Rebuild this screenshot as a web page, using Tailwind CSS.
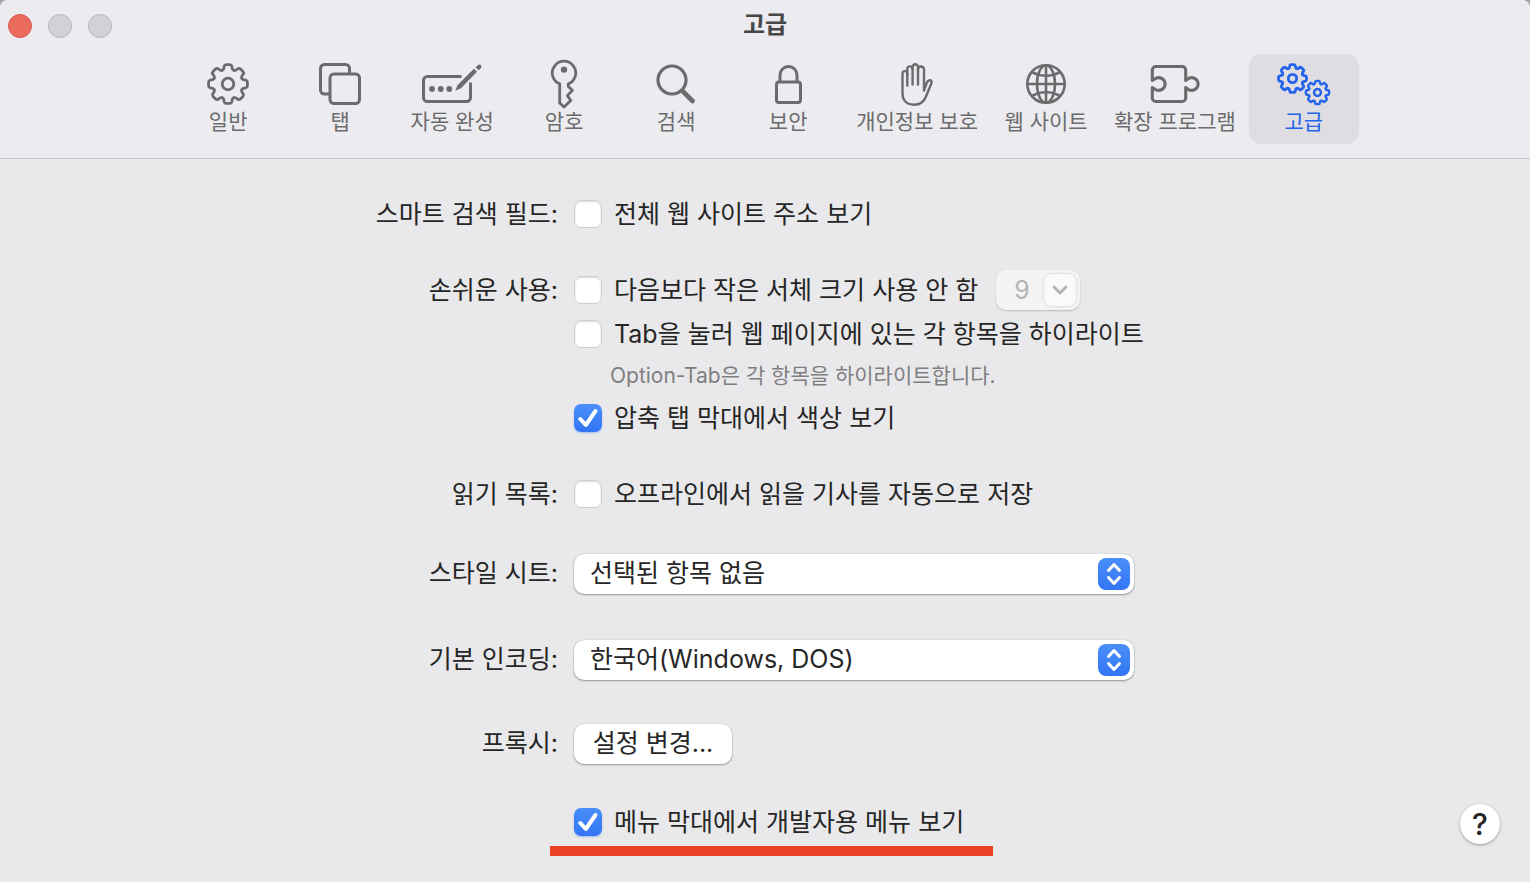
<!DOCTYPE html>
<html lang="ko">
<head>
    <meta charset="UTF-8">
    <meta name="viewport" content="width=device-width, initial-scale=1.0">
    <title>고급</title>
    <script src="https://cdn.jsdelivr.net/npm/@tailwindcss/browser@4"></script>
</head>
<body class="bg-[#a4a4a6] font-['Inter','Noto_Sans_CJK_KR',sans-serif] text-[#262626]">

    <!-- Gear outline, one tooth repeated eight times -->
    <svg class="hidden" aria-hidden="true">
        <defs>
            <path id="tooth" d="M-5.7-13.8Q-4.5-14.3-4.3-15.3L-3.8-17.8Q-3.4-19.4-1.8-19.4H1.8Q3.4-19.4 3.8-17.8L4.3-15.3Q4.5-14.3 5.7-13.8"/>
            <g id="gear">
                <use href="#tooth"/>
                <use href="#tooth" transform="rotate(45)"/>
                <use href="#tooth" transform="rotate(90)"/>
                <use href="#tooth" transform="rotate(135)"/>
                <use href="#tooth" transform="rotate(180)"/>
                <use href="#tooth" transform="rotate(225)"/>
                <use href="#tooth" transform="rotate(270)"/>
                <use href="#tooth" transform="rotate(315)"/>
                <circle r="5.8"/>
            </g>
        </defs>
    </svg>

    <div class="relative flex flex-col min-h-screen bg-[#e9e9eb] rounded-t-lg overflow-hidden">

        <!-- Title bar and toolbar -->
        <header class="bg-[#ecebef] border-b border-[#c3c3c6] pb-[14px]">
            <div class="relative flex items-center justify-center h-[54px] pb-1">
                <div class="absolute left-2 top-[14px] flex gap-4">
                    <button aria-label="닫기" class="size-6 rounded-full bg-[#ec6a5e] border border-[#d5564b]"></button>
                    <button aria-label="최소화" class="size-6 rounded-full bg-[#d2d1d6] border border-[#b5b4b8]"></button>
                    <button aria-label="확대" class="size-6 rounded-full bg-[#d2d1d6] border border-[#b5b4b8]"></button>
                </div>
                <h1 class="text-[24px] leading-8 font-bold text-[#474747]">고급</h1>
            </div>

            <nav class="flex justify-center gap-[2px] pl-[2px] text-[21px] leading-6 text-[#6b6b6d]">
                <button class="flex flex-col items-center min-w-[110px] h-[90px] pt-1 px-[11px] rounded-xl">
                    <span class="flex items-center h-[52px]">
                        <svg width="42" height="42" viewBox="-21 -21 42 42" fill="none" stroke="currentColor" stroke-width="2.8" stroke-linecap="round"><use href="#gear"/></svg>
                    </span>
                    일반
                </button>
                <button class="flex flex-col items-center min-w-[110px] h-[90px] pt-1 px-[11px] rounded-xl">
                    <span class="flex items-center h-[52px]">
                        <svg width="42" height="42" viewBox="0 0 42 42" fill="none" stroke="currentColor" stroke-width="3">
                            <path d="M30.5 10V5.5a4 4 0 0 0-4-4H5.5a4 4 0 0 0-4 4V27a4 4 0 0 0 4 4H10"/>
                            <rect x="11" y="11" width="29.5" height="29.5" rx="4"/>
                        </svg>
                    </span>
                    탭
                </button>
                <button class="flex flex-col items-center min-w-[110px] h-[90px] pt-1 px-[11px] rounded-xl">
                    <span class="flex items-center h-[52px]">
                        <svg width="60" height="42" viewBox="0 0 60 42" fill="none" stroke="currentColor" stroke-width="3">
                            <path d="M39.5 13.5H5.5a4 4 0 0 0-4 4V34.5a4 4 0 0 0 4 4H44.5a4 4 0 0 0 4-4V19.5"/>
                            <g fill="currentColor" stroke="none">
                                <circle cx="10" cy="26" r="2.9"/>
                                <circle cx="18.7" cy="26" r="2.9"/>
                                <circle cx="27.3" cy="26" r="2.9"/>
                                <path d="M33.3 27.7L35.6 22L52 5.8L55 8.8L39 25.2Z"/>
                                <path d="M53.6 4.2L55.5 2.6Q57 .8 58.7 2Q60.2 3.8 58.6 5.4L56.7 7.2Z"/>
                            </g>
                        </svg>
                    </span>
                    자동 완성
                </button>
                <button class="flex flex-col items-center min-w-[110px] h-[90px] pt-1 px-[11px] rounded-xl">
                    <span class="flex items-center h-[52px]">
                        <svg width="28" height="50" viewBox="0 0 28 50" fill="none" stroke="currentColor" stroke-width="2.8" stroke-linejoin="round">
                            <path d="M9.7 24.8V44L14 48L20.8 41.5L17.4 36.6L22.4 31.3L18.3 27.5V24.8A11.7 11.7 0 1 0 9.7 24.8Z"/>
                            <circle cx="14" cy="10.6" r="3.2" fill="currentColor" stroke="none"/>
                        </svg>
                    </span>
                    암호
                </button>
                <button class="flex flex-col items-center min-w-[110px] h-[90px] pt-1 px-[11px] rounded-xl">
                    <span class="flex items-center h-[52px]">
                        <svg width="40" height="40" viewBox="0 0 40 40" fill="none" stroke="currentColor" stroke-linecap="round">
                            <circle cx="16" cy="16" r="14" stroke-width="3.2"/>
                            <path d="M26.5 27L36.5 37" stroke-width="4.6"/>
                        </svg>
                    </span>
                    검색
                </button>
                <button class="flex flex-col items-center min-w-[110px] h-[90px] pt-1 px-[11px] rounded-xl">
                    <span class="flex items-center h-[52px]">
                        <svg width="27" height="40" viewBox="0 0 27 40" fill="none" stroke="currentColor" stroke-width="3">
                            <rect x="1.5" y="18" width="24" height="20.5" rx="2.5"/>
                            <path d="M5 18V11a8.5 8.5 0 0 1 17 0V18"/>
                        </svg>
                    </span>
                    보안
                </button>
                <button class="flex flex-col items-center min-w-[110px] h-[90px] pt-1 px-[11px] rounded-xl">
                    <span class="flex items-center h-[52px]">
                        <svg width="34" height="43" viewBox="0 0 34 43" fill="none" stroke="currentColor" stroke-width="2.4" stroke-linecap="round" stroke-linejoin="round">
                            <path d="M7.3 22.5V10.5a2.4 2.4 0 0 0-4.8 0V30.5C2.5 37.5 7 41.7 14 41.7C20.5 41.7 24 38.5 26 33.5L31.3 20.5C32 18.6 31.5 17.5 30 17.2C28.5 17 27.5 18 26.8 19.5L24 27.5V6.5a3 3 0 0 0-6 0"/>
                            <path d="M18 21.5V4a2.7 2.7 0 0 0-5.4 0V21.5"/>
                            <path d="M12.6 6a2.6 2.6 0 0 0-5.3 0V12"/>
                        </svg>
                    </span>
                    개인정보 보호
                </button>
                <button class="flex flex-col items-center min-w-[110px] h-[90px] pt-1 px-[11px] rounded-xl">
                    <span class="flex items-center h-[52px]">
                        <svg width="42" height="42" viewBox="0 0 42 42" fill="none" stroke="currentColor" stroke-width="2.6">
                            <circle cx="21" cy="21" r="18.7"/>
                            <ellipse cx="21" cy="21" rx="9" ry="18.7"/>
                            <path d="M21 2V40M2 21H40M7.5 9.5Q21 16.5 34.5 9.5M7.5 32.5Q21 25.5 34.5 32.5"/>
                        </svg>
                    </span>
                    웹 사이트
                </button>
                <button class="flex flex-col items-center min-w-[110px] h-[90px] pt-1 px-[11px] rounded-xl">
                    <span class="flex items-center h-[52px]">
                        <svg width="50" height="40" viewBox="0 0 50 40" fill="none" stroke="currentColor" stroke-width="3.1" stroke-linejoin="round">
                            <path d="M2.3 16.5V6a3.5 3.5 0 0 1 3.5-3.5H32.2a3.5 3.5 0 0 1 3.5 3.5V16.5L37.5 15.2A6.4 6.4 0 1 1 37.5 24.8L35.7 23.5V34a3.5 3.5 0 0 1-3.5 3.5H5.8a3.5 3.5 0 0 1-3.5-3.5V23.5L4.5 24.8A6.4 6.4 0 1 0 4.5 15.2Z"/>
                        </svg>
                    </span>
                    확장 프로그램
                </button>
                <button aria-current="page" class="flex flex-col items-center min-w-[110px] h-[90px] pt-1 px-[11px] rounded-xl bg-[#dedde2] text-[#2563eb]">
                    <span class="flex items-center h-[52px]">
                        <svg width="56" height="46" viewBox="0 0 56 46" fill="none" stroke="currentColor" stroke-linecap="round">
                            <use href="#gear" transform="translate(16.5 17.5) scale(.72)" stroke-width="3.9"/>
                            <use href="#gear" transform="translate(41.5 31.5) scale(.6)" stroke-width="4.1"/>
                        </svg>
                    </span>
                    고급
                </button>
            </nav>
        </header>

        <!-- Settings -->
        <main class="grid grid-cols-[180px_578px] gap-x-4 justify-center content-start pt-[33px] pb-9 text-[25px] leading-8">

            <div class="flex items-center justify-end h-11 whitespace-nowrap">스마트 검색 필드:</div>
            <label class="flex items-center gap-3 h-11">
                <input type="checkbox" class="appearance-none size-7 rounded-[7px] bg-white border border-[#cfcfd1] shadow-[inset_0_1px_2px_rgba(0,0,0,0.15)]">
                전체 웹 사이트 주소 보기
            </label>

            <div class="flex items-center justify-end h-11 mt-8 whitespace-nowrap">손쉬운 사용:</div>
            <div class="mt-8">
                <div class="flex items-center gap-[18px] h-11">
                    <label class="flex items-center gap-3">
                        <input type="checkbox" class="appearance-none size-7 rounded-[7px] bg-white border border-[#cfcfd1] shadow-[inset_0_1px_2px_rgba(0,0,0,0.15)]">
                        다음보다 작은 서체 크기 사용 안 함
                    </label>
                    <div class="relative">
                        <select disabled aria-label="최소 서체 크기" class="appearance-none block w-[84px] h-10 pl-[18px] rounded-[10px] bg-[#f4f4f5] text-[#b4b4b5] opacity-100 shadow-[0_1px_2px_rgba(0,0,0,0.2)]">
                            <option>9</option>
                        </select>
                        <span class="absolute right-1 top-1 flex items-center justify-center size-8 rounded-lg bg-[#fafafa] shadow-[0_0_3px_rgba(0,0,0,0.18)] pointer-events-none">
                            <svg width="16" height="10" viewBox="0 0 16 10" fill="none" stroke="#b4b4b5" stroke-width="3" stroke-linecap="round" stroke-linejoin="round"><path d="M2 2L8 8L14 2"/></svg>
                        </span>
                    </div>
                </div>
                <label class="flex items-center gap-3 h-11 whitespace-nowrap">
                    <input type="checkbox" class="appearance-none size-7 rounded-[7px] bg-white border border-[#cfcfd1] shadow-[inset_0_1px_2px_rgba(0,0,0,0.15)]">
                    Tab을 눌러 웹 페이지에 있는 각 항목을 하이라이트
                </label>
                <p class="flex items-center h-10 pl-9 text-[21px] text-[#7f7f81]">Option-Tab은 각 항목을 하이라이트합니다.</p>
                <label class="relative flex items-center gap-3 h-11">
                    <input type="checkbox" checked class="appearance-none size-7 rounded-[7px] bg-linear-to-b from-[#4a8ff8] to-[#3375f6] shadow-[0_1px_2px_rgba(51,117,246,0.4)]">
                    <svg class="absolute left-0 top-2 pointer-events-none" width="28" height="28" viewBox="0 0 28 28" fill="none" stroke="#fff" stroke-width="4" stroke-linecap="round" stroke-linejoin="round"><path d="M6.3 15L11.8 21L21.5 7"/></svg>
                    압축 탭 막대에서 색상 보기
                </label>
            </div>

            <div class="flex items-center justify-end h-11 mt-8 whitespace-nowrap">읽기 목록:</div>
            <label class="flex items-center gap-3 h-11 mt-8">
                <input type="checkbox" class="appearance-none size-7 rounded-[7px] bg-white border border-[#cfcfd1] shadow-[inset_0_1px_2px_rgba(0,0,0,0.15)]">
                오프라인에서 읽을 기사를 자동으로 저장
            </label>

            <label for="stylesheet" class="flex items-center justify-end h-10 mt-[38px] pb-[3px] whitespace-nowrap">스타일 시트:</label>
            <div class="relative w-[560px] mt-[38px]">
                <select id="stylesheet" class="appearance-none block w-full h-10 px-4 pb-[3px] rounded-[10px] bg-white shadow-[0_1px_2px_rgba(0,0,0,0.35),0_0_1px_rgba(0,0,0,0.3)]">
                    <option>선택된 항목 없음</option>
                </select>
                <span class="absolute right-1 top-1 flex items-center justify-center size-8 rounded-lg bg-linear-to-b from-[#4a8ff8] to-[#3375f6] pointer-events-none">
                    <svg width="16" height="24" viewBox="0 0 16 24" fill="none" stroke="#fff" stroke-width="3" stroke-linecap="round" stroke-linejoin="round"><path d="M2.5 8.5L8 2.5L13.5 8.5M2.5 15.5L8 21.5L13.5 15.5"/></svg>
                </span>
            </div>

            <label for="encoding" class="flex items-center justify-end h-10 mt-[46px] pb-[3px] whitespace-nowrap">기본 인코딩:</label>
            <div class="relative w-[560px] mt-[46px]">
                <select id="encoding" class="appearance-none block w-full h-10 px-4 pb-[3px] rounded-[10px] bg-white shadow-[0_1px_2px_rgba(0,0,0,0.35),0_0_1px_rgba(0,0,0,0.3)]">
                    <option>한국어(Windows, DOS)</option>
                </select>
                <span class="absolute right-1 top-1 flex items-center justify-center size-8 rounded-lg bg-linear-to-b from-[#4a8ff8] to-[#3375f6] pointer-events-none">
                    <svg width="16" height="24" viewBox="0 0 16 24" fill="none" stroke="#fff" stroke-width="3" stroke-linecap="round" stroke-linejoin="round"><path d="M2.5 8.5L8 2.5L13.5 8.5M2.5 15.5L8 21.5L13.5 15.5"/></svg>
                </span>
            </div>

            <div class="flex items-center justify-end h-10 mt-11 pb-[3px] whitespace-nowrap">프록시:</div>
            <div class="mt-11">
                <button class="block w-[158px] h-10 pb-[3px] rounded-[10px] bg-white shadow-[0_1px_2px_rgba(0,0,0,0.35),0_0_1px_rgba(0,0,0,0.3)]">설정 변경...</button>
            </div>

            <div class="relative col-start-2 mt-9">
                <label class="relative flex items-center gap-3 h-11">
                    <input type="checkbox" checked class="appearance-none size-7 rounded-[7px] bg-linear-to-b from-[#4a8ff8] to-[#3375f6] shadow-[0_1px_2px_rgba(51,117,246,0.4)]">
                    <svg class="absolute left-0 top-2 pointer-events-none" width="28" height="28" viewBox="0 0 28 28" fill="none" stroke="#fff" stroke-width="4" stroke-linecap="round" stroke-linejoin="round"><path d="M6.3 15L11.8 21L21.5 7"/></svg>
                    메뉴 막대에서 개발자용 메뉴 보기
                </label>
                <span class="absolute -left-6 top-[46px] w-[443px] h-[10px] bg-[#ea4025]"></span>
            </div>
        </main>

        <button aria-label="도움말" class="absolute right-[30px] bottom-[38px] size-10 rounded-full bg-white text-[30px] leading-10 font-medium shadow-[0_1px_3px_rgba(0,0,0,0.35)]">?</button>
    </div>

</body>
</html>
